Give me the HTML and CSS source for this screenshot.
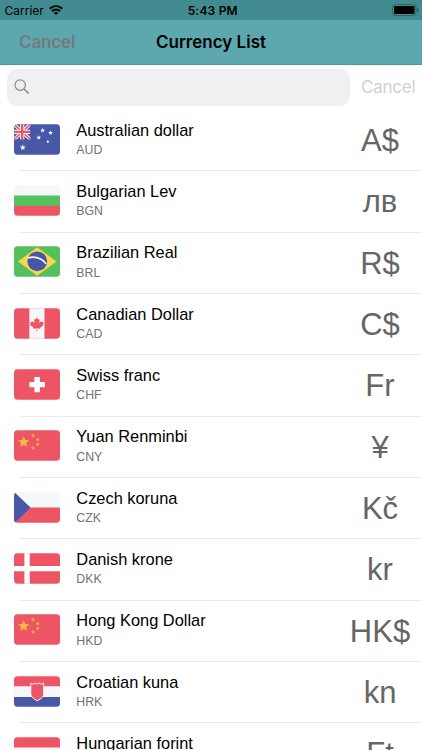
FILE: index.html
```html
<!DOCTYPE html>
<html lang="en">
<head>
<meta charset="utf-8">
<title>Currency List</title>
<link rel="stylesheet" href="styles.css">
</head>
<body>
<svg class="defs" width="0" height="0" aria-hidden="true">
  <defs>
    <path id="star" d="M0-1 .27-.36.95-.31.43.14.59.81 0 .45-.59.81-.43.14-.95-.31-.27-.36Z"/>
    <g id="china">
      <path fill="#ed5565" d="M0 0h47v31H0z"/>
      <g fill="#f6b83f">
        <use href="#star" transform="translate(9.8 12) scale(6)"/>
        <use href="#star" transform="translate(19.2 5.4) scale(2.2)"/>
        <use href="#star" transform="translate(24 9.4) scale(2.2)"/>
        <use href="#star" transform="translate(24 14.2) scale(2.2)"/>
        <use href="#star" transform="translate(19.2 18) scale(2.2)"/>
      </g>
    </g>
  </defs>
</svg>
<div class="screen">
  <header class="header">
    <div class="status">
      <span class="carrier">Carrier
        <svg class="wifi" viewBox="0 0 14 10"><g fill="none" stroke="#000" stroke-width="1.9"><path d="M.7 3.7a9 9 0 0 1 12.6 0"/><path d="M2.9 6.2a5.9 5.9 0 0 1 8.2 0"/></g><path d="M4.8 7.9a3.2 3.2 0 0 1 4.4 0L7 10z"/></svg>
      </span>
      <span class="time">5:43 PM</span>
      <svg class="battery" viewBox="0 0 28 12"><rect x=".5" y=".5" width="23.5" height="11" rx="2.6" fill="none" stroke="#2b6669"/><rect x="2" y="2" width="20.5" height="8" rx="1"/><path d="M25.3 4c1.6.6 1.6 3.4 0 4z" fill="#1d4b4e"/></svg>
    </div>
    <nav class="nav"><span class="nav-cancel">Cancel</span><h1>Currency List</h1><span></span></nav>
  </header>
  <div class="search">
    <div class="field"><svg viewBox="0 0 16 16"><g fill="none" stroke="#8b8b8f"><circle cx="6.2" cy="6.1" r="5.2" stroke-width="1.2"/><path d="m10 10 4.7 4.5" stroke-width="1.7"/></g></svg></div>
    <span class="search-cancel">Cancel</span>
  </div>
  <main class="list">
    <div class="row">
      <svg class="flag" viewBox="0 0 47 31"><path fill="#4758a9" d="M0 0h47v31H0z"/><svg width="16.5" height="15.5" viewBox="0 0 16.5 15.5"><path stroke="#f5f7fa" stroke-width="3.4" d="m0 0 16.5 15.5m0-15.5L0 15.5"/><path stroke="#ed5565" stroke-width="1.5" d="m0 0 16.5 15.5m0-15.5L0 15.5"/><path stroke="#f5f7fa" stroke-width="4.4" d="M8.25 0v15.5M0 7.75h16.5"/><path stroke="#ed5565" stroke-width="2.4" d="M8.25 0v15.5M0 7.75h16.5"/></svg><g fill="#f5f7fa"><use href="#star" transform="translate(8.9 23.6) scale(3.1)"/><use href="#star" transform="translate(28.9 6.3) scale(2.5)"/><use href="#star" transform="translate(36.9 8.8) scale(2.5)"/><use href="#star" transform="translate(25 13.6) scale(2.5)"/><use href="#star" transform="translate(34.2 17.6) scale(1.8)"/></g></svg>
      <div class="body"><div class="label"><span class="name">Australian dollar</span><span class="code">AUD</span></div><span class="symbol">A$</span></div>
    </div>
    <div class="row">
      <svg class="flag" viewBox="0 0 47 31"><path fill="#f5f7fa" d="M0 0h47v11H0z"/><path fill="#55c15f" d="M0 10.5h47v11H0z"/><path fill="#ed5565" d="M0 20.8h47V31H0z"/></svg>
      <div class="body"><div class="label"><span class="name">Bulgarian Lev</span><span class="code">BGN</span></div><span class="symbol">лв</span></div>
    </div>
    <div class="row">
      <svg class="flag" viewBox="0 0 47 31"><path fill="#55bf5c" d="M0 0h47v31H0z"/><path fill="#fbd54b" d="M4 15.5 23.5 1 43 15.5 23.5 30z"/><circle cx="23.5" cy="15.3" r="10" fill="#4656a8"/><path fill="none" stroke="#f5f7fa" stroke-width="1.7" d="M14.2 11.8c7-1.7 14 .8 18.3 6"/></svg>
      <div class="body"><div class="label"><span class="name">Brazilian Real</span><span class="code">BRL</span></div><span class="symbol">R$</span></div>
    </div>
    <div class="row">
      <svg class="flag" viewBox="0 0 47 31"><path fill="#ed5565" d="M0 0h47v31H0z"/><path fill="#f5f7fa" d="M15.5 0h15.3v31H15.5z"/><path fill="#ed5565" d="m23.1 9.2 1.5 2.5 1.500-.7-.6 4 2.100-1.900.5 1 1.900-.2-.8 2.200.9.600-3.600 3.100.3 1.100-3.400-.5.100 3h-.8l.1-3-3.500.5.400-1.100-3.700-3.100 1-.6-.8-2.200 1.900.2.500-1 2.100 1.900-.6-4 1.500.7z"/></svg>
      <div class="body"><div class="label"><span class="name">Canadian Dollar</span><span class="code">CAD</span></div><span class="symbol">C$</span></div>
    </div>
    <div class="row">
      <svg class="flag" viewBox="0 0 47 31"><path fill="#ed5565" d="M0 0h47v31H0z"/><path fill="#fff" d="M21.3 7.8h4.2q.7 0 .7.7v4.4h4.4q.7 0 .7.7v3.900q0 .7-.7.700h-4.400v4.500q0 .7-.7.700h-4.200q-.7 0-.7-.7v-4.500h-4.400q-.7 0-.7-.7v-3.900q0-.7.7-.7h4.400V8.500q0-.7.7-.7z"/></svg>
      <div class="body"><div class="label"><span class="name">Swiss franc</span><span class="code">CHF</span></div><span class="symbol">Fr</span></div>
    </div>
    <div class="row">
      <svg class="flag" viewBox="0 0 47 31"><use href="#china"/></svg>
      <div class="body"><div class="label"><span class="name">Yuan Renminbi</span><span class="code">CNY</span></div><span class="symbol">¥</span></div>
    </div>
    <div class="row">
      <svg class="flag" viewBox="0 0 47 31"><path fill="#f5f7fa" d="M0 0h47v16H0z"/><path fill="#ed5565" d="M0 15.6h47V31H0z"/><path fill="#4758a9" d="M0 0l1 .7 15.700 14.900L1.200 30.500 0 31z"/></svg>
      <div class="body"><div class="label"><span class="name">Czech koruna</span><span class="code">CZK</span></div><span class="symbol">Kč</span></div>
    </div>
    <div class="row">
      <svg class="flag" viewBox="0 0 47 31"><path fill="#ed5565" d="M0 0h47v31H0z"/><path stroke="#fff" stroke-width="5.4" d="M13.2 0v31M0 15.7h47"/></svg>
      <div class="body"><div class="label"><span class="name">Danish krone</span><span class="code">DKK</span></div><span class="symbol">kr</span></div>
    </div>
    <div class="row">
      <svg class="flag" viewBox="0 0 47 31"><use href="#china"/></svg>
      <div class="body"><div class="label"><span class="name">Hong Kong Dollar</span><span class="code">HKD</span></div><span class="symbol">HK$</span></div>
    </div>
    <div class="row">
      <svg class="flag" viewBox="0 0 47 31"><path fill="#ed5565" d="M0 0h47v11H0z"/><path fill="#f5f7fa" d="M0 10.2h47v11H0z"/><path fill="#4758a9" d="M0 21h47v10H0z"/><path fill="#ed5565" stroke="#f5f7fa" stroke-width="1" d="m17 7 2.300 1.200L21.500 7l2 1 2-1 2.200 1.200L30 7v10.500q0 4.500-6.500 7.300Q17 22 17 17.500z"/></svg>
      <div class="body"><div class="label"><span class="name">Croatian kuna</span><span class="code">HRK</span></div><span class="symbol">kn</span></div>
    </div>
    <div class="row">
      <svg class="flag" viewBox="0 0 47 31"><path fill="#ed5565" d="M0 0h47v11H0z"/><path fill="#f5f7fa" d="M0 10.5h47v11H0z"/><path fill="#55c15f" d="M0 20.8h47V31H0z"/></svg>
      <div class="body"><div class="label"><span class="name">Hungarian forint</span><span class="code">HUF</span></div><span class="symbol">Ft</span></div>
    </div>
  </main>
</div>
</body>
</html>
```
FILE: styles.css
```css
* { box-sizing: border-box; }
body { margin: 0; background: #fff; color: #000; font-family: "Liberation Sans", Arial, sans-serif; }
.defs { display: block; height: 0; }
.screen { width: 422px; height: 750px; overflow: hidden; display: flex; flex-direction: column; }

.header { flex: none; height: 65px; background: #5ca8ae; border-bottom: 1px solid #4f979d; font-family: Inter, sans-serif; }
.status { height: 20px; background: #418b91; display: grid; grid-template-columns: 1fr auto 1fr; align-items: center; padding: 0 2px 0 4.5px; font-size: 12px; }
.carrier { display: flex; align-items: center; gap: 5.5px; letter-spacing: 0; }
.wifi { width: 14px; height: 10px; }
.time { font-weight: 600; letter-spacing: .2px; margin-left: 1px; }
.battery { width: 28px; height: 12px; justify-self: end; }
.nav { height: 43.5px; display: grid; grid-template-columns: 1fr auto 1fr; align-items: center; padding: 0 19px; font-size: 17px; font-weight: 600; }
.nav h1 { margin: 0; font: inherit; letter-spacing: 0; }
.nav-cancel { color: #737b7d; letter-spacing: -.15px; }

.search { flex: none; height: 45px; display: flex; align-items: flex-start; padding: 4px 6px 0 7px; }
.field { flex: none; width: 342.5px; height: 36.5px; border-radius: 10px; background: #f0f0f3; padding: 10px 7px; }
.field svg { display: block; width: 16px; height: 16px; }
.search-cancel { margin-left: 11.5px; line-height: 36px; font-family: Inter, sans-serif; font-size: 17px; letter-spacing: -.25px; color: #d0d0d2; }

.list { flex: none; }
.row { height: 61.34px; display: flex; align-items: flex-start; padding-left: 13.5px; background: linear-gradient(#ececee, #ececee) 18.5px 100% / 100% 1px no-repeat; }
.flag { flex: none; width: 46.5px; height: 31px; margin-top: 13.8px; border-radius: 4px; overflow: hidden; }
.body { flex: 1; height: 100%; display: flex; justify-content: space-between; padding-left: 16.3px; }
.label { display: flex; flex-direction: column; padding-top: 9.6px; white-space: nowrap; }
.name { font-size: 16.4px; line-height: 20px; }
.code { font-size: 12.3px; line-height: 16px; margin-top: 2.3px; color: #717171; }
.symbol { width: 84px; text-align: center; font-size: 31px; line-height: 61px; color: #666; }
```
